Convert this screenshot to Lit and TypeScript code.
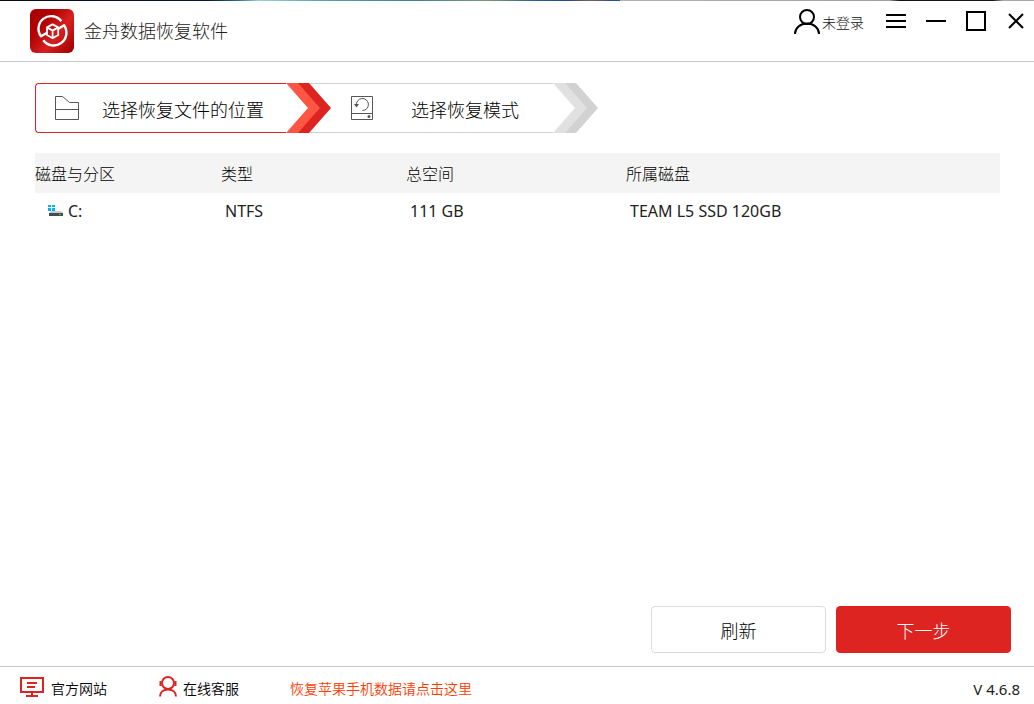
import { LitElement, html, css, svg } from "lit";
import { customElement, state } from "lit/decorators.js";

interface Volume {
  name: string;
  type: string;
  size: string;
  disk: string;
}

const logo = svg`
  <svg class="logo" viewBox="0 0 44 44" aria-hidden="true">
    <defs>
      <linearGradient id="lg" x1="0" y1="0.1" x2="1" y2="0.9">
        <stop offset="0" stop-color="#a90000" />
        <stop offset="0.3" stop-color="#b00404" />
        <stop offset="0.62" stop-color="#d82020" />
        <stop offset="1" stop-color="#a40000" />
      </linearGradient>
    </defs>
    <rect width="44" height="44" rx="6" fill="url(#lg)" />
    <g fill="none" stroke="#fff" stroke-linejoin="round">
      <path d="M31.300 12.200A12.600 12.600 0 0 0 11 27.300L17.500 23.500" stroke-width="2.400" />
      <path d="M13.300 31.200A12.600 12.600 0 0 0 34 16.200L28 20" stroke-width="2.400" />
      <path d="M22.600 15.400l5.600 3v7.600l-5.600 3.200-5.600-3.200v-7.600zM17 18.400l5.600 3.200 5.600-3.200M22.600 21.600v7" stroke-width="1.800" />
    </g>
  </svg>`;

@customElement("app-root")
export class AppRoot extends LitElement {
  static styles = css`
    :host {
      display: flex;
      flex-direction: column;
      min-height: 100vh;
      box-sizing: border-box;
      background: #fff;
      color: #000;
      font-family: "Noto Sans", "Noto Sans CJK SC", sans-serif;
      font-weight: 300;
      font-size: 16px;
    }
    * { box-sizing: border-box; }
    svg { display: block; flex: none; }
    button { font: inherit; color: inherit; cursor: pointer; }
    .edge {
      height: 1px;
      background: linear-gradient(90deg, #060a14 0%, #0c1430 20%, #2b6a90 23%, #a0d0d8 25%, #5aa0b8 31%, #3d7f95 40%, #7d9a70 47%, #2b5a90 52%, #284a88 55%, #806050 57%, #2b5090 59%, #2b5090 60%, #b0b0b0 60%, #a0a0a0 86%, #10141c 87%, #10141c 96%, #a8a8a8 97%);
    }
    .bar {
      display: flex;
      align-items: center;
      height: 61px;
      padding: 0 8px 0 30px;
      border-bottom: 1px solid #c8c8c8;
    }
    .logo { width: 44px; height: 44px; }
    .title { margin: 0 auto 0 10px; font-size: 18px; line-height: 24px; font-weight: 300; color: #222; }
    .tools { display: flex; align-items: center; align-self: flex-start; height: 40px; gap: 20px; }
    .tools button { display: flex; align-items: center; gap: 2px; padding: 0; border: 0; background: none; }
    .tools .login { margin-right: 2px; font-size: 14px; line-height: 20px; color: #111; }
    .login span { padding-top: 3px; }
    .main { flex: 1; display: flex; flex-direction: column; padding: 21px 23px 13px 35px; }
    .steps { display: flex; margin: 0; padding: 0; list-style: none; }
    .step { display: flex; height: 50px; font-size: 18px; line-height: 24px; }
    .label { display: flex; align-items: center; padding-top: 4px; border: 1px solid #d2d2d2; border-width: 1px 0; }
    .label svg { margin-top: -4px; }
    .on { z-index: 1; }
    .on .label { width: 251px; gap: 22px; padding-left: 18px; border-color: #dd2420; border-left-width: 1px; border-radius: 4px 0 0 4px; }
    .next { margin-left: -22px; }
    .next .label { width: 244px; gap: 37px; padding-left: 41px; }
    .list { margin-top: 20px; padding-right: 11px; }
    table { width: 100%; border-collapse: collapse; table-layout: fixed; }
    th, td { padding: 0; text-align: left; font-weight: 300; line-height: 24px; }
    th { height: 40px; padding-top: 1px; background: #f4f4f4; }
    td { height: 36px; padding-left: 4px; font-weight: 400; color: #222; }
    .c1 { width: 186px; }
    .c2 { width: 185px; }
    .c3 { width: 220px; }
    .vol { display: flex; align-items: center; gap: 4px; padding-left: 9px; }
    .actions { display: flex; justify-content: flex-end; gap: 10px; margin-top: auto; }
    .btn { width: 175px; height: 47px; padding: 0; border: 1px solid #dcdcdc; border-radius: 4px; background: #fff; font-size: 18px; }
    .primary { border-color: #dd2420; background: #dd2420; color: #fff; }
    footer { display: flex; align-items: center; height: 38px; padding: 2px 14px 0 20px; border-top: 1px solid #c8c8c8; font-size: 14px; line-height: 20px; font-weight: 350; }
    footer a { display: flex; align-items: center; gap: 7px; color: inherit; text-decoration: none; }
    footer span { padding-top: 4px; }
    .service { gap: 5px; margin-left: 51px; }
    footer .promo { margin-left: 51px; color: #ff3c00; }
    .version { margin-left: auto; font-size: 15px; font-weight: 400; color: #222; }
  `;

  @state() private volumes: Volume[] = [
    { name: "C:", type: "NTFS", size: "111 GB", disk: "TEAM L5 SSD 120GB" },
  ];

  private arrow(light: string, dark: string) {
    return html`<svg width="45" height="50" viewBox="0 0 45 50" aria-hidden="true">
      <path d="M0 0h14l22 25-22 25H0l22-25z" fill=${light} />
      <path d="M12 0h11l22 25-22 25H12l22-25z" fill=${dark} />
    </svg>`;
  }

  render() {
    return html`
      <div class="edge"></div>
      <header class="bar">
        ${logo}
        <h1 class="title">金舟数据恢复软件</h1>
        <div class="tools">
          <button class="login">
            <svg width="26" height="26" viewBox="0 0 26 26" fill="none" stroke="#000" stroke-width="2">
              <circle cx="13" cy="9" r="7" /><path d="M1 26a12 10.500 0 0 1 24 0" />
            </svg>
            <span>未登录</span>
          </button>
          <button aria-label="菜单">
            <svg width="20" height="20" viewBox="0 0 20 20" stroke="#000" stroke-width="2"><path d="M0 4h20M0 10h20M0 16h20" /></svg>
          </button>
          <button aria-label="最小化">
            <svg width="20" height="20" viewBox="0 0 20 20" stroke="#000" stroke-width="2"><path d="M0 10h20" /></svg>
          </button>
          <button aria-label="最大化">
            <svg width="20" height="20" viewBox="0 0 20 20" fill="none" stroke="#000" stroke-width="2"><path d="M1 1h18v18H1z" /></svg>
          </button>
          <button aria-label="关闭">
            <svg width="20" height="20" viewBox="0 0 20 20" stroke="#000" stroke-width="2"><path d="M3 3l14 14M17 3L3 17" /></svg>
          </button>
        </div>
      </header>
      <main class="main">
        <ol class="steps">
          <li class="step on">
            <div class="label">
              <svg width="26" height="26" viewBox="0 0 26 26" fill="none" stroke="#555"><path d="M1.500 1.500h7l7 6h9v17h-23zM1.500 14.500h23" /></svg>
              <span>选择恢复文件的位置</span>
            </div>
            ${this.arrow("#ff5545", "#dd2420")}
          </li>
          <li class="step next">
            <div class="label">
              <svg width="24" height="26" viewBox="0 0 24 26" fill="none" stroke="#555">
                <path d="M1.500 1.500h21v23h-21zM1.500 18.500h21M6.500 10.500a6 6 0 1 1 6 5" />
                <path d="M4 9h5l-2.500 3.500z" fill="#555" stroke="none" /><circle cx="19" cy="21.500" r="1.500" fill="#555" stroke="none" />
              </svg>
              <span>选择恢复模式</span>
            </div>
            ${this.arrow("#e1e1e1", "#d2d2d2")}
          </li>
        </ol>
        <div class="list">
          <table>
            <thead>
              <tr><th class="c1">磁盘与分区</th><th class="c2">类型</th><th class="c3">总空间</th><th>所属磁盘</th></tr>
            </thead>
            <tbody>
              ${this.volumes.map((v) => html`<tr>
                <td><div class="vol">
                  <svg width="16" height="16" viewBox="0 0 16 16" aria-hidden="true">
                    <path d="M0 2h3v2H0zM4 2h3v2H4zM0 5h3v3H0zM4 5h3v3H4z" fill="#00b4f0" />
                    <path d="M3 8h10l2 2H1z" fill="#c8ccd0" /><path d="M1 10h14v3H1z" fill="#444c50" />
                    <path d="M11 11h2v1h-2z" fill="#20e040" />
                  </svg>${v.name}</div></td>
                <td>${v.type}</td><td>${v.size}</td><td>${v.disk}</td>
              </tr>`)}
            </tbody>
          </table>
        </div>
        <div class="actions">
          <button class="btn">刷新</button>
          <button class="btn primary">下一步</button>
        </div>
      </main>
      <footer>
        <a href="#site">
          <svg width="24" height="20" viewBox="0 0 24 20" fill="none" stroke="#dd2420" stroke-width="2">
            <path d="M1 1h22v14H1zM12 15v4M6 19h12M7 6h10M7 10h8" />
          </svg><span>官方网站</span></a>
        <a class="service" href="#service">
          <svg width="20" height="21" viewBox="0 0 20 21" fill="none" stroke="#dd2420" stroke-width="2">
            <circle cx="10" cy="7" r="6" /><path d="M2.500 5v5M17.500 5v5M2 20.500c0-4 3-7 8-7s8 3 8 7" />
          </svg><span>在线客服</span></a>
        <a class="promo" href="#iphone"><span>恢复苹果手机数据请点击这里</span></a>
        <span class="version">V 4.6.8</span>
      </footer>
    `;
  }
}
